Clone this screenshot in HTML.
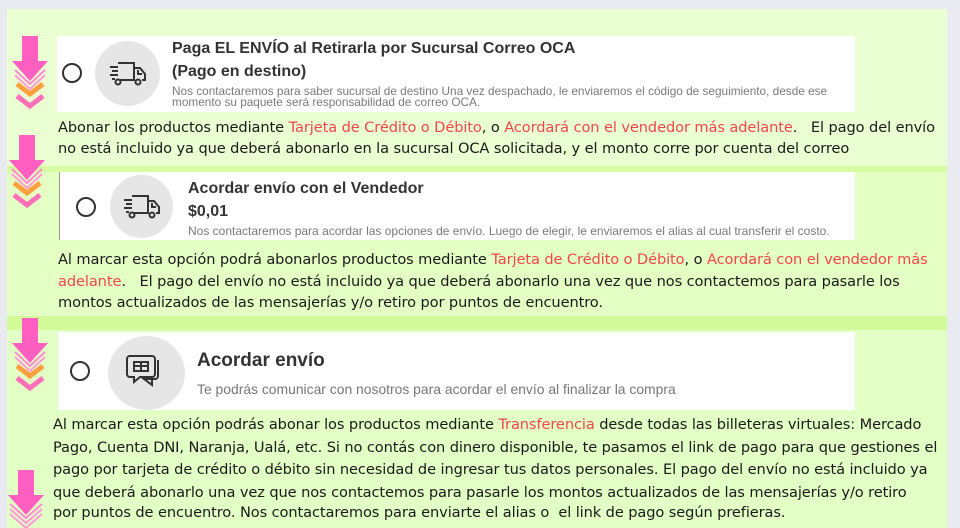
<!DOCTYPE html>
<html><head><meta charset="utf-8"><style>
*{margin:0;padding:0;box-sizing:border-box}
body{width:960px;height:528px;overflow:hidden;background:#e9ebf0;position:relative;font-family:"Liberation Sans",sans-serif}
.abs{position:absolute}
.card{position:absolute;background:#fff}
.t{position:absolute;white-space:nowrap;color:#222}
.p{position:absolute;white-space:nowrap;font-family:"DejaVu Sans","Liberation Sans",sans-serif;font-size:14.6px;color:#1a1a1a;letter-spacing:-0.1px}
.r{color:#f0474d}
.radio{position:absolute;border:2px solid #333;border-radius:50%;width:20px;height:20px}
.ic{position:absolute;border-radius:50%;background:#e6e6e6}
.s{color:#7a7a7a;font-size:11.8px;line-height:11px}
</style></head><body>
<div class="abs" style="left:7px;top:9px;width:940px;height:157px;background:#eaffd2"></div>
<div class="abs" style="left:7px;top:166px;width:940px;height:6px;background:#d8fca2"></div>
<div class="abs" style="left:7px;top:172px;width:940px;height:144px;background:#e4ffc4"></div>
<div class="abs" style="left:7px;top:316px;width:940px;height:14px;background:#d4fb9a"></div>
<div class="abs" style="left:7px;top:330px;width:940px;height:198px;background:#e2ffc6"></div>

<svg class="abs" style="left:0;top:0" width="60" height="528">
<defs><g id="ar">
<rect x="10" y="0" width="16" height="27" fill="#ff5fc0"/>
<polygon points="0,25 36,25 18,45" fill="#ff5fc0"/>
<polyline points="3,34 18,48 33,34" fill="none" stroke="#ff8ad2" stroke-width="2"/>
<polyline points="3,39 18,53 33,39" fill="none" stroke="#ff9ad8" stroke-width="2"/>
<polyline points="5,48 18,58 31,48" fill="none" stroke="#ffa040" stroke-width="5"/>
<polyline points="5,60 18,70 31,60" fill="none" stroke="#ff70b8" stroke-width="5"/>
</g></defs>
<use href="#ar" transform="translate(12,36)"/>
<use href="#ar" transform="translate(9,135)"/>
<use href="#ar" transform="translate(12,318)"/>
<g transform="translate(8,470)"><rect x="10" y="0" width="16" height="27" fill="#ff5fc0"/><polygon points="0,25 36,25 18,45" fill="#ff5fc0"/><polyline points="2,34 18,48 34,34" fill="none" stroke="#ff8ad2" stroke-width="2"/><polyline points="2,39 18,53 34,39" fill="none" stroke="#ff9ad8" stroke-width="2"/><polyline points="2,44 18,58 34,44" fill="none" stroke="#ff9ad8" stroke-width="2"/></g>
</svg>

<!-- card 1 -->
<div class="card" style="left:57px;top:36px;width:798px;height:76px"></div>
<div class="radio" style="left:62px;top:63px"></div>
<div class="ic" style="left:95px;top:41px;width:65px;height:65px"></div>
<svg class="abs" style="left:108px;top:59px" width="40" height="30" viewBox="0 0 40 30" fill="none" stroke="#333" stroke-width="2">
<path d="M10 4h16v17M26 9h6l5 6v6h-3M12 21h15M2 8h8M4 12h6M2 16h8M4 20h3"/><path d="M30 11v4h4"/><circle cx="10" cy="23" r="2.5"/><circle cx="30" cy="23" r="2.5"/></svg>
<div class="t" style="left:172px;top:40px;font-size:16px;font-weight:bold;color:#333">Paga EL ENVÍO al Retirarla por Sucursal Correo OCA</div>
<div class="t" style="left:172px;top:63px;font-size:16px;font-weight:bold;color:#333">(Pago en destino)</div>
<div class="t s" style="left:172px;top:86px">Nos contactaremos para saber sucursal de destino Una vez despachado, le enviaremos el código de seguimiento, desde ese</div>
<div class="t s" style="left:172px;top:97px">momento su paquete será responsabilidad de correo OCA.</div>
<div class="p" style="left:58px;top:119px">Abonar los productos mediante <span class="r">Tarjeta de Crédito o Débito</span>, o <span class="r">Acordará con el vendedor más adelante</span>.&nbsp;&nbsp; El pago del envío</div>
<div class="p" style="left:58px;top:140px">no está incluido ya que deberá abonarlo en la sucursal OCA solicitada, y el monto corre por cuenta del correo</div>

<!-- card 2 -->
<div class="card" style="left:59px;top:172px;width:796px;height:68px;border-left:1px solid #999"></div>
<div class="radio" style="left:76px;top:197px"></div>
<div class="ic" style="left:110px;top:175px;width:63px;height:63px"></div>
<svg class="abs" style="left:122px;top:192px" width="40" height="30" viewBox="0 0 40 30" fill="none" stroke="#333" stroke-width="2">
<path d="M10 4h16v17M26 9h6l5 6v6h-3M12 21h15M2 8h8M4 12h6M2 16h8M4 20h3"/><path d="M30 11v4h4"/><circle cx="10" cy="23" r="2.5"/><circle cx="30" cy="23" r="2.5"/></svg>
<div class="t" style="left:188px;top:180px;font-size:16px;font-weight:bold;color:#333">Acordar envío con el Vendedor</div>
<div class="t" style="left:188px;top:203px;font-size:16px;font-weight:bold;color:#333">$0,01</div>
<div class="t s" style="left:188px;top:226px;font-size:12px">Nos contactaremos para acordar las opciones de envío. Luego de elegir, le enviaremos el alias al cual transferir el costo.</div>
<div class="p" style="left:58px;top:251px">Al marcar esta opción podrá abonarlos productos mediante <span class="r">Tarjeta de Crédito o Débito</span>, o <span class="r">Acordará con el vendedor más</span></div>
<div class="p" style="left:58px;top:273px"><span class="r">adelante</span>.&nbsp;&nbsp; El pago del envío no está incluido ya que deberá abonarlo una vez que nos contactemos para pasarle los</div>
<div class="p" style="left:58px;top:294px">montos actualizados de las mensajerías y/o retiro por puntos de encuentro.</div>

<!-- card 3 -->
<div class="card" style="left:58px;top:332px;width:797px;height:78px"></div>
<div class="radio" style="left:70px;top:361px"></div>
<div class="ic" style="left:108px;top:336px;width:77px;height:74px"></div>
<svg class="abs" style="left:126px;top:354px" width="40" height="36" viewBox="0 0 40 36" fill="none" stroke="#333" stroke-width="2">
<path d="M4 2h22a3 3 0 0 1 3 3v15a3 3 0 0 1-3 3H14l-6 5v-5H4a3 3 0 0 1-3-3V5a3 3 0 0 1 3-3z"/>
<path d="M32 6v16a3 3 0 0 1-3 3H18l8 6v-6"/>
<rect x="8" y="8" width="14" height="9"/><path d="M8 12h14M15 8v9"/></svg>
<div class="t" style="left:197px;top:350px;font-size:19px;font-weight:bold;color:#333">Acordar envío</div>
<div class="t" style="left:197px;top:381px;font-size:13.9px;color:#777">Te podrás comunicar con nosotros para acordar el envío al finalizar la compra</div>
<div class="p" style="left:53px;top:416px">Al marcar esta opción podrás abonar los productos mediante <span class="r">Transferencia</span> desde todas las billeteras virtuales: Mercado</div>
<div class="p" style="left:53px;top:439px">Pago, Cuenta DNI, Naranja, Ualá, etc. Si no contás con dinero disponible, te pasamos el link de pago para que gestiones el</div>
<div class="p" style="left:53px;top:461px">pago por tarjeta de crédito o débito sin necesidad de ingresar tus datos personales. El pago del envío no está incluido ya</div>
<div class="p" style="left:53px;top:484px">que deberá abonarlo una vez que nos contactemos para pasarle los montos actualizados de las mensajerías y/o retiro</div>
<div class="p" style="left:53px;top:504px">por puntos de encuentro. Nos contactaremos para enviarte el alias o&nbsp; el link de pago según prefieras.</div>
</body></html>
